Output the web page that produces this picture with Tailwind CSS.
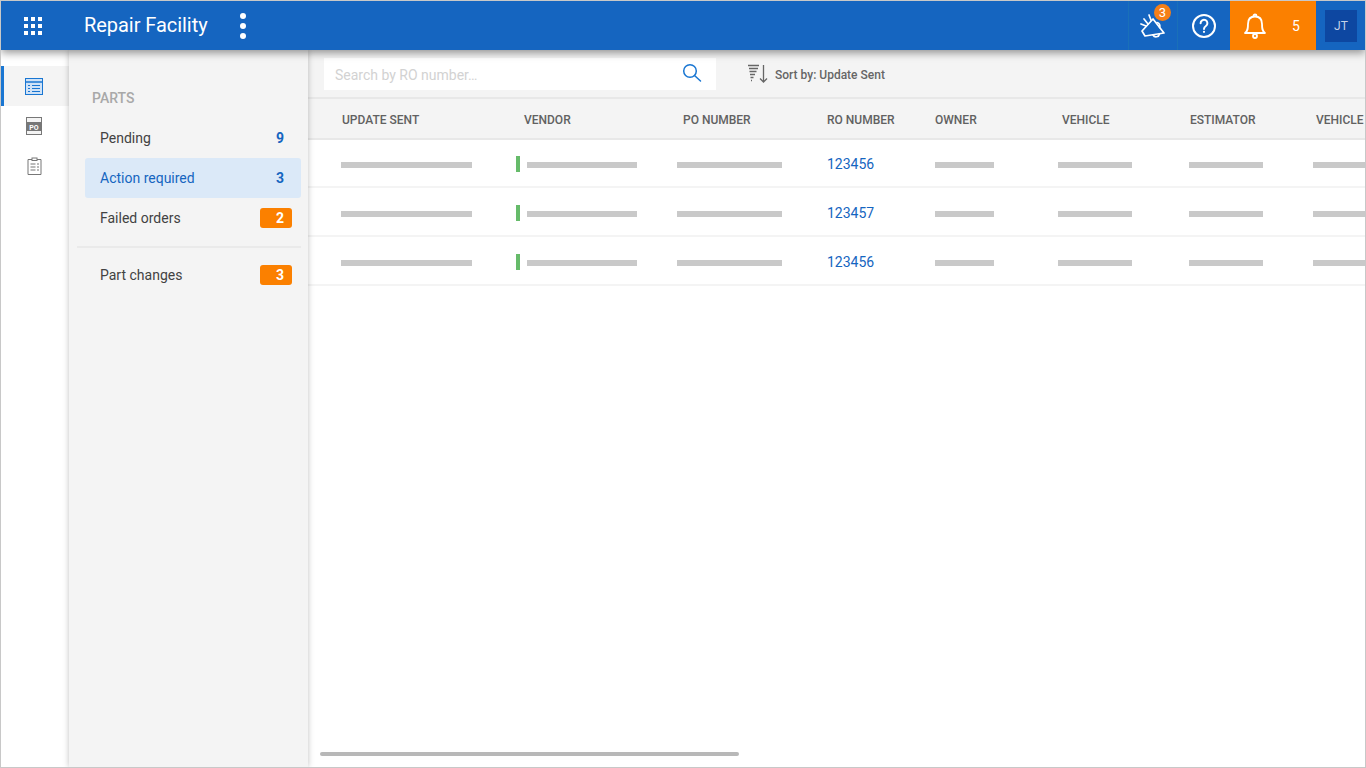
<!DOCTYPE html>
<html><head><meta charset="utf-8"><script src="https://cdn.jsdelivr.net/npm/@tailwindcss/browser@4"></script></head>
<body class="m-0 overflow-hidden bg-white">
<div class="w-[1366px] h-[768px] border border-[#c8c8c8] flex flex-col overflow-hidden font-['Roboto',sans-serif] relative">
  <header class="h-[49px] shrink-0 bg-[#1565c0] flex items-center text-white relative z-30 shadow-[0_3px_8px_rgba(0,0,0,0.4)]">
    <div class="ml-[23px] w-[18px] h-[18px] grid grid-cols-3 gap-[3px]">
      <i class="bg-white"></i><i class="bg-white"></i><i class="bg-white"></i><i class="bg-white"></i><i class="bg-white"></i><i class="bg-white"></i><i class="bg-white"></i><i class="bg-white"></i><i class="bg-white"></i>
    </div>
    <div class="ml-[42px] mb-[2px] text-[20px] leading-none tracking-[-0.05px]">Repair Facility</div>
    <div class="ml-[32px] flex flex-col gap-[4px]"><i class="block size-[6px] rounded-full bg-white"></i><i class="block size-[6px] rounded-full bg-white"></i><i class="block size-[6px] rounded-full bg-white"></i></div>
    <div class="ml-auto flex h-full items-stretch">
      <div class="w-[50px] border-x border-[#1a70b8] flex items-center justify-center relative">
        <svg width="30" height="30" viewBox="0 0 30 30" fill="none" stroke="white" stroke-width="1.700" stroke-linejoin="round" stroke-linecap="round">
          <path d="M4 20 L15 8 L26 22 L7 25 Z"/><path d="M15 24 a3.500 3.500 0 0 0 6.500 -1"/><path d="M19 11.500 a3.500 3.500 0 0 1 2.500 5"/><path d="M3 13 L8 15 M6 8 L10 13 M11 4 L13 9"/>
        </svg>
        <div class="absolute left-[25px] top-[3px] size-[17px] rounded-full bg-[#f57f17] text-white text-[13px] leading-[17px] text-center">3</div>
      </div>
      <div class="w-[52px] flex items-center justify-center">
        <svg width="26" height="26" viewBox="0 0 26 26" fill="none" stroke="white" stroke-width="2"><circle cx="13" cy="13" r="11"/><path d="M9.600 10.200 a3.400 3.400 0 1 1 5.300 2.800 c-1.300 0.900 -1.900 1.500 -1.900 3" stroke-linecap="round"/><circle cx="13" cy="18.800" r="0.500" fill="white" stroke-width="1.200"/></svg>
      </div>
      <div class="w-[86px] bg-[#fb8000] flex items-center">
        <svg class="ml-[12px]" width="26" height="28" viewBox="0 0 26 28" fill="none" stroke="white" stroke-width="1.800" stroke-linejoin="round"><path d="M3 21 C6 19 6 16 6 12 C6 7 9 4.500 13 4.500 C17 4.500 20 7 20 12 C20 16 20 19 23 21 Z"/><path d="M11.500 4 a1.500 1.500 0 0 1 3 0"/><circle cx="13" cy="24" r="2"/></svg>
        <span class="ml-[24px] text-[14px] leading-none">5</span>
      </div>
      <div class="w-[49px] flex items-center justify-center">
        <div class="size-[32px] bg-[#0d47a1] text-[#c5d3e8] text-[12px] pl-[1px] flex items-center justify-center">JT</div>
      </div>
    </div>
  </header>
  <div class="flex flex-1 min-h-0">
    <nav class="w-[68px] shrink-0 bg-white pt-[16px] relative z-10 flex flex-col">
      <div class="h-[40px] bg-[#f4f4f4] border-l-[3px] border-[#1976d2] flex items-center justify-center pr-[5px]">
        <svg width="18" height="17" viewBox="0 0 18 17"><rect x="0.500" y="0.500" width="17" height="16" fill="#cfe2f7" stroke="#1976d2"/><path d="M1 4h16" stroke="#1976d2" stroke-width="1.500"/><path d="M3 7.500h2M7 7.500h8M3 10.500h2M7 10.500h8M3 13.500h2M7 13.500h8" stroke="#1976d2" stroke-width="1.200"/></svg>
      </div>
      <div class="h-[40px] flex items-center justify-center pr-[2px]">
        <svg width="16" height="18" viewBox="0 0 16 18"><rect x="0.500" y="0.500" width="15" height="17" fill="#f4f4f4" stroke="#777"/><rect x="1" y="5" width="14" height="9" fill="#777"/><text x="8" y="12.500" text-anchor="middle" font-family="Roboto" font-weight="700" font-size="7" fill="#fff">PO</text></svg>
      </div>
      <div class="h-[40px] flex items-center justify-center pr-[2px]">
        <svg width="15" height="18" viewBox="0 0 15 18" fill="none" stroke="#777"><path d="M5 2.500H1v15h13v-15h-4"/><rect x="5" y="1" width="5" height="2.500" fill="#fff"/><path d="M3.500 7h5M3.500 10h5M3.500 13h5M10 7h2M10 10h2M10 13h2"/></svg>
      </div>
    </nav>
    <aside class="w-[239px] shrink-0 bg-[#f4f4f4] relative z-20 shadow-[0_0_6px_rgba(0,0,0,0.25)] text-[14px] text-[#424242]">
      <div class="ml-[23px] mt-[40px] h-[16px] text-[14px] leading-[16px] font-medium text-[#a8a8a8]">PARTS</div>
      <div class="mt-[12px] h-[40px] flex items-center justify-between pl-[31px] pr-[24px]"><span>Pending</span><b class="text-[#1565c0] font-bold text-[14px]">9</b></div>
      <div class="ml-[16px] mr-[7px] h-[40px] rounded-[3px] bg-[#dbe9f8] text-[#1565c0] flex items-center justify-between pl-[15px] pr-[17px]"><span>Action required</span><b class="font-bold text-[14px]">3</b></div>
      <div class="h-[40px] flex items-center justify-between pl-[31px] pr-[16px]"><span>Failed orders</span><b class="w-[32px] h-[20px] rounded-[3px] bg-[#fb8000] text-white text-[14px] leading-[20px] text-right pr-[8px] font-bold">2</b></div>
      <div class="ml-[8px] mr-[7px] mt-[8px] border-t-2 border-[#eaeaea]"></div>
      <div class="mt-[7px] h-[40px] flex items-center justify-between pl-[31px] pr-[16px]"><span>Part changes</span><b class="w-[32px] h-[20px] rounded-[3px] bg-[#fb8000] text-white text-[14px] leading-[20px] text-right pr-[8px] font-bold">3</b></div>
    </aside>
    <main class="flex-1 min-w-0 overflow-hidden relative bg-white">
      <div class="h-[47px] bg-[#f4f4f4] flex items-center pl-[16px]">
        <div class="w-[392px] h-[32px] mt-[1px] bg-white flex items-center pl-[11px] pr-[14px] justify-between">
          <span class="text-[14px] text-[#d2d2d2] pt-[2px]">Search by RO number…</span>
          <svg class="mb-[2px]" width="20" height="20" viewBox="0 0 20 20" fill="none" stroke="#1976d2" stroke-width="1.500"><circle cx="8" cy="8" r="6.300"/><path d="M12.500 12.500 L18.500 18" stroke-linecap="round"/></svg>
        </div>
        <svg class="ml-[32px]" width="20" height="20" viewBox="0 0 20 20" fill="none" stroke="#666"><path d="M0 1.500h11M1 4.500h9M1.500 7.500h7M2 10.500h5M2.500 13.500h3M3 16.500h1" stroke-width="1.400"/><path d="M15.500 1v17M12 14.500l3.500 3.500l3.500 -3.500" stroke-width="1.300"/></svg>
        <span class="ml-[7px] mt-[3px] text-[12px] font-medium text-[#666]">Sort by: Update Sent</span>
      </div>
      <div class="h-[43px] pt-[2px] bg-[#f4f4f4] border-y-2 border-[#e8e8e8] flex items-center text-[12px] font-medium text-[#616161] whitespace-nowrap">
        <span class="ml-[34px] w-[182px] shrink-0">UPDATE SENT</span><span class="w-[159px] shrink-0">VENDOR</span><span class="w-[144px] shrink-0">PO NUMBER</span><span class="w-[108px] shrink-0">RO NUMBER</span><span class="w-[127px] shrink-0">OWNER</span><span class="w-[128px] shrink-0">VEHICLE</span><span class="w-[126px] shrink-0">ESTIMATOR</span><span class="shrink-0">VEHICLE</span>
      </div>
      <div class="flex h-[48px] pt-[4px] items-center border-b-2 border-[#f4f4f4] whitespace-nowrap">
        <i class="block shrink-0 ml-[33px] w-[131px] h-[6px] bg-[#c9c9c9]"></i><i class="block shrink-0 ml-[44px] mb-[2px] w-[4px] h-[16px] bg-[#66bb6a]"></i><i class="block shrink-0 ml-[7px] w-[110px] h-[6px] bg-[#c9c9c9]"></i><i class="block shrink-0 ml-[40px] w-[105px] h-[6px] bg-[#c9c9c9]"></i><a class="block shrink-0 ml-[45px] mb-[2px] w-[108px] text-[14px] text-[#1565c0]">123456</a><i class="block shrink-0 w-[59px] h-[6px] bg-[#c9c9c9]"></i><i class="block shrink-0 ml-[64px] w-[74px] h-[6px] bg-[#c9c9c9]"></i><i class="block shrink-0 ml-[57px] w-[74px] h-[6px] bg-[#c9c9c9]"></i><i class="block ml-[50px] w-[74px] h-[6px] shrink-0 bg-[#c9c9c9]"></i>
      </div>
      <div class="flex h-[49px] pt-[5px] items-center border-b-2 border-[#f4f4f4] whitespace-nowrap">
        <i class="block shrink-0 ml-[33px] w-[131px] h-[6px] bg-[#c9c9c9]"></i><i class="block shrink-0 ml-[44px] mb-[2px] w-[4px] h-[16px] bg-[#66bb6a]"></i><i class="block shrink-0 ml-[7px] w-[110px] h-[6px] bg-[#c9c9c9]"></i><i class="block shrink-0 ml-[40px] w-[105px] h-[6px] bg-[#c9c9c9]"></i><a class="block shrink-0 ml-[45px] mb-[2px] w-[108px] text-[14px] text-[#1565c0]">123457</a><i class="block shrink-0 w-[59px] h-[6px] bg-[#c9c9c9]"></i><i class="block shrink-0 ml-[64px] w-[74px] h-[6px] bg-[#c9c9c9]"></i><i class="block shrink-0 ml-[57px] w-[74px] h-[6px] bg-[#c9c9c9]"></i><i class="block ml-[50px] w-[74px] h-[6px] shrink-0 bg-[#c9c9c9]"></i>
      </div>
      <div class="flex h-[49px] pt-[5px] items-center border-b-2 border-[#f4f4f4] whitespace-nowrap">
        <i class="block shrink-0 ml-[33px] w-[131px] h-[6px] bg-[#c9c9c9]"></i><i class="block shrink-0 ml-[44px] mb-[2px] w-[4px] h-[16px] bg-[#66bb6a]"></i><i class="block shrink-0 ml-[7px] w-[110px] h-[6px] bg-[#c9c9c9]"></i><i class="block shrink-0 ml-[40px] w-[105px] h-[6px] bg-[#c9c9c9]"></i><a class="block shrink-0 ml-[45px] mb-[2px] w-[108px] text-[14px] text-[#1565c0]">123456</a><i class="block shrink-0 w-[59px] h-[6px] bg-[#c9c9c9]"></i><i class="block shrink-0 ml-[64px] w-[74px] h-[6px] bg-[#c9c9c9]"></i><i class="block shrink-0 ml-[57px] w-[74px] h-[6px] bg-[#c9c9c9]"></i><i class="block ml-[50px] w-[74px] h-[6px] shrink-0 bg-[#c9c9c9]"></i>
      </div>
      <div class="absolute left-[12px] bottom-[11px] w-[419px] h-[4px] rounded-full bg-[#b8b8b8]"></div>
    </main>
  </div>
</div>
</body></html>
